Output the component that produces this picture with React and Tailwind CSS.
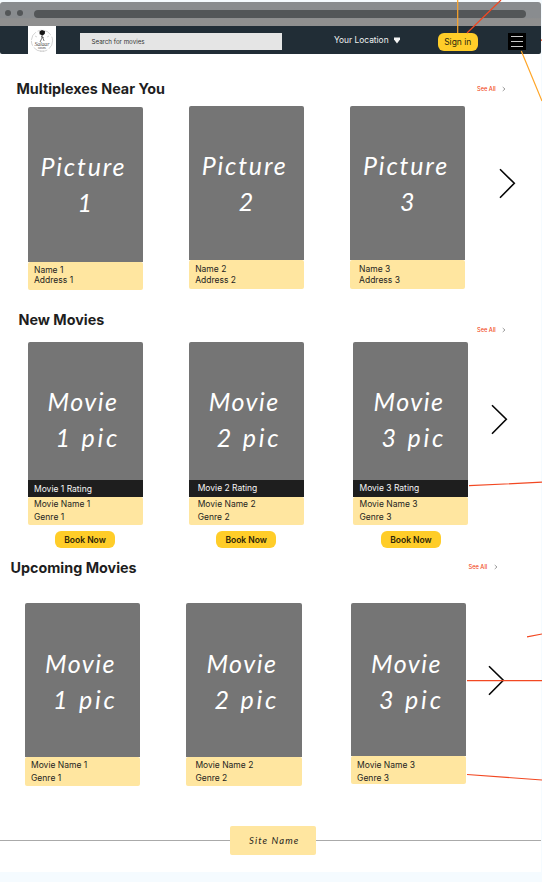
import React from "react";

function SeeAll({ className }) {
  return (
    <div className={`flex items-center text-[5.7px] font-medium leading-[8px] text-[#f24822] ${className}`}>
      <span className="w-[25px] whitespace-nowrap">See All</span>
      <svg width="4" height="6" viewBox="0 0 4 6" fill="none" stroke="#777" strokeWidth="0.7">
        <path d="M0.7 1 3 3 0.7 5" />
      </svg>
    </div>
  );
}

function NextArrow({ className }) {
  return (
    <svg className={`shrink-0 ${className}`} width="17" height="31" viewBox="0 0 17 31" fill="none" stroke="#050505" strokeWidth="1.6">
      <path d="M1 1.3 15.3 15.3 1 29.7" />
    </svg>
  );
}

function SectionHeader({ title, className, titleClass, seeAllClass }) {
  return (
    <div className={`flex justify-between ${className}`}>
      <h2 className={`whitespace-nowrap text-[14.35px] font-bold leading-[20px] text-[#1e1e1e] ${titleClass}`}>{title}</h2>
      <SeeAll className={seeAllClass} />
    </div>
  );
}

const script = "font-['Lato'] italic text-white whitespace-pre";

function Poster({ kind, n, className }) {
  const picture = kind === "picture";
  return (
    <div className={`rounded-t-[2px] bg-[#757575] ${className}`}>
      <div className={`flex h-[36px] items-center text-[25px] leading-[36px] ${script} ${picture ? "pl-[13px] tracking-[1.8px]" : "pl-[20px] tracking-[1.5px]"}`}>
        {picture ? "Picture" : "Movie"}
      </div>
      {picture ? (
        <div className={`pl-[50px] text-[25px] leading-[36px] ${script}`}>{n}</div>
      ) : (
        <div className={`flex text-[25px] leading-[36px] pl-[28px] ${script}`}>
          <span className="w-[26px]">{n}</span>
          <span className="tracking-[2.8px]">pic</span>
        </div>
      )}
    </div>
  );
}

function Caption({ top, bottom, className }) {
  return (
    <div className={`whitespace-nowrap rounded-[2px] bg-[#ffe6a0] text-[8.5px] text-[#1e1e1e] ${className}`}>
      <div>{top}</div>
      <div>{bottom}</div>
    </div>
  );
}

function Logo() {
  return (
    <div className="ml-[28px] h-[28px] w-[28px] shrink-0 bg-white">
      <svg width="28" height="28" viewBox="0 0 28 28" fill="none">
        <circle cx="14" cy="14.8" r="10.6" stroke="#b5b5b5" strokeWidth="0.6" strokeDasharray="9 2 5 1" />
        <path d="M11.5 5.5 14 4l3 1.2-.2 2.6-2 1.7-3.2-1.2z" fill="#151515" />
        <path d="M14 9v3l-2 4M14.5 11l1.6 4M13 10.5l2.6 1" stroke="#555" strokeWidth="0.8" />
        <path d="m7 10 2 1M19 11l2-1M12 25h4" stroke="#bbb" strokeWidth="0.6" />
        <text x="6.5" y="20.3" fontSize="6" fontStyle="italic" fontFamily="Liberation Serif, serif" fill="#555" textLength="15">Salaar</text>
        <text x="10" y="23" fontSize="2.6" fontFamily="Inter, sans-serif" fill="#555" textLength="8">MOVIES</text>
      </svg>
    </div>
  );
}

function Header() {
  return (
    <header>
      <div className="flex h-[24px] items-start rounded-t-[3px] bg-linear-to-b from-[#898c8f] from-65% to-[#8f8f8f] to-70% pt-[7px]">
        <span className="ml-[5px] mt-[0.5px] h-[6px] w-[6px] rounded-full bg-[#535658]" />
        <span className="ml-[5.5px] mt-[0.5px] h-[6px] w-[6px] rounded-full bg-[#535658]" />
        <span className="ml-[11.5px] mt-[0.5px] h-[8.5px] w-[492px] rounded-[4px] bg-[#535658]" />
      </div>
      <nav className="flex h-[28px] rounded-b-[2px] bg-[#212d36]">
        <Logo />
        <div className="ml-[24px] mt-[7px] h-[17px] w-[202px] bg-[#e5e5e5] pl-[11.5px] text-[6.2px] leading-[17px] text-[#333]">Search for movies</div>
        <div className="ml-[52px] flex h-[29px] w-[103px] items-center text-[8.4px] text-[#eef0f1]">
          <span className="w-[59px] shrink-0 whitespace-nowrap">Your Location</span>
          <svg className="shrink-0" width="8" height="7" viewBox="0 0 8 7" fill="#f5f5f5"><path d="M1 .4h6v2L4 6.6 1 2.4z" /></svg>
        </div>
        <div className="ml-[0.5px] mt-[7px] h-[17.5px] w-[40.5px] whitespace-nowrap rounded-[6px] bg-[#ffcd29] text-center text-[8.5px] leading-[18.5px] text-[#2c290e]">Sign in</div>
        <div className="ml-[30px] mt-[7px] flex h-[17px] w-[18px] flex-col items-center justify-center gap-[4px] bg-black">
          <span className="h-px w-[12px] bg-[#c9c9c9]" />
          <span className="h-px w-[12px] bg-[#c9c9c9]" />
          <span className="h-px w-[12px] bg-[#c9c9c9]" />
        </div>
      </nav>
    </header>
  );
}

function BookNow() {
  return (
    <div className="ml-[27.5px] mt-[5.5px] h-[17.5px] w-[60px] whitespace-nowrap rounded-[6px] bg-[#ffcd29] text-center text-[8.5px] font-semibold leading-[18px] text-[#2c2408]">Book Now</div>
  );
}

function Multiplexes() {
  const cards = [
    [1, "ml-[27.5px] mt-[1.3px]", "pl-[6.5px] pt-[3px]"],
    [2, "ml-[46.2px]", "pl-[6.5px] pt-[4px]"],
    [3, "ml-[46.4px]", "pl-[9px] pt-[4px]"],
  ];
  return (
    <section className="h-[246px]">
      <SectionHeader title="Multiplexes Near You" className="pl-[16.5px] pr-[35px] pt-[25px]" titleClass="" seeAllClass="h-[8px] mt-[6px]" />
      <div className="mt-[6.7px] flex items-start">
        {cards.map(([n, place, inset]) => (
          <article key={n} className={`w-[115px] shrink-0 ${place}`}>
            <Poster kind="picture" n={n} className="h-[154.6px] pt-[41px]" />
            <Caption top={`Name ${n}`} bottom={`Address ${n}`} className={`h-[28.6px] leading-[10.6px] ${inset}`} />
          </article>
        ))}
        <NextArrow className="ml-[34px] mt-[62px]" />
      </div>
    </section>
  );
}

function NewMovies() {
  const cards = [
    [1, "ml-[27.5px]", "pl-[6.5px]", "pl-[6.5px] leading-[18.5px]"],
    [2, "ml-[46.2px]", "pl-[9px]", "pl-[9px] leading-[17px]"],
    [3, "ml-[49.8px]", "pl-[6px]", "pl-[6px] leading-[17px]"],
  ];
  return (
    <section className="h-[250px]">
      <SectionHeader title="New Movies" className="pl-[18.5px] pr-[35px] pt-[10px]" titleClass="" seeAllClass="h-[8px] mt-[15.5px]" />
      <div className="mt-[8px] flex items-start">
        {cards.map(([n, place, inset, rating]) => (
          <article key={n} className={`w-[115px] shrink-0 ${place}`}>
            <Poster kind="movie" n={n} className="h-[138px] pt-[41.5px]" />
            <div className={`h-[17px] whitespace-nowrap bg-[#1e1e1e] text-[8.5px] text-[#f5f5f5] ${rating}`}>{`Movie ${n} Rating`}</div>
            <Caption top={`Movie Name ${n}`} bottom={`Genre ${n}`} className={`h-[28.5px] pt-[1.3px] leading-[13px] ${inset}`} />
            <BookNow />
          </article>
        ))}
        <NextArrow className="ml-[22.5px] mt-[62px]" />
      </div>
    </section>
  );
}

function UpcomingMovies() {
  const cards = [
    [1, "ml-[25px]", "h-[154px]", "pl-[6px] pt-[2px]"],
    [2, "ml-[46.2px]", "h-[154px]", "pl-[9px] pt-[2px]"],
    [3, "ml-[49.5px]", "h-[152.5px]", "pl-[6px] pt-[3.5px]"],
  ];
  return (
    <section className="h-[275.5px]">
      <SectionHeader title="Upcoming Movies" className="pl-[10.5px] pr-[43.5px] pt-[7px]" titleClass="relative top-[0.5px]" seeAllClass="h-[8px] mt-[6px]" />
      <div className="mt-[26px] flex items-start">
        {cards.map(([n, place, height, inset]) => (
          <article key={n} className={`w-[115.2px] shrink-0 ${place}`}>
            <Poster kind="movie" n={n} className={`pt-[41.5px] ${height}`} />
            <Caption top={`Movie Name ${n}`} bottom={`Genre ${n}`} className={`h-[28.5px] leading-[13px] ${inset}`} />
          </article>
        ))}
        <NextArrow className="ml-[22px] mt-[62px]" />
      </div>
    </section>
  );
}

function Connectors() {
  return (
    <svg className="pointer-events-none absolute left-0 top-0" width="542" height="882" viewBox="0 0 542 882" fill="none">
      <path d="M457.7 0V33M521.3 51 542 101" stroke="#ffa629" strokeWidth="1.2" />
      <path d="M501 0 467 33M469 485.7 542 482.2M527 636.8 542 634M467 680.6H542M467 774.5 542 780M541 40.2H542" stroke="#f24822" strokeWidth="1.2" />
    </svg>
  );
}

export default function App() {
  return (
    <div className="relative h-[882px] w-[542px] overflow-hidden bg-[#f5fbff] pt-[2px] font-['Inter',sans-serif]">
      <main className="h-[870px] w-[541px] bg-white">
        <Header />
        <Multiplexes />
        <NewMovies />
        <UpcomingMovies />
        <footer className="flex h-[29px] items-center">
          <span className="h-px w-[230px] bg-[#aaaaaa]" />
          <div className="h-[29px] w-[86px] whitespace-nowrap rounded-[2px] bg-[#ffe6a0] pl-[19px] font-['Lato'] text-[9.5px] italic leading-[29px] tracking-[1.1px] text-[#29251c]">Site Name</div>
          <span className="h-px flex-1 bg-[#aaaaaa]" />
        </footer>
      </main>
      <Connectors />
    </div>
  );
}
